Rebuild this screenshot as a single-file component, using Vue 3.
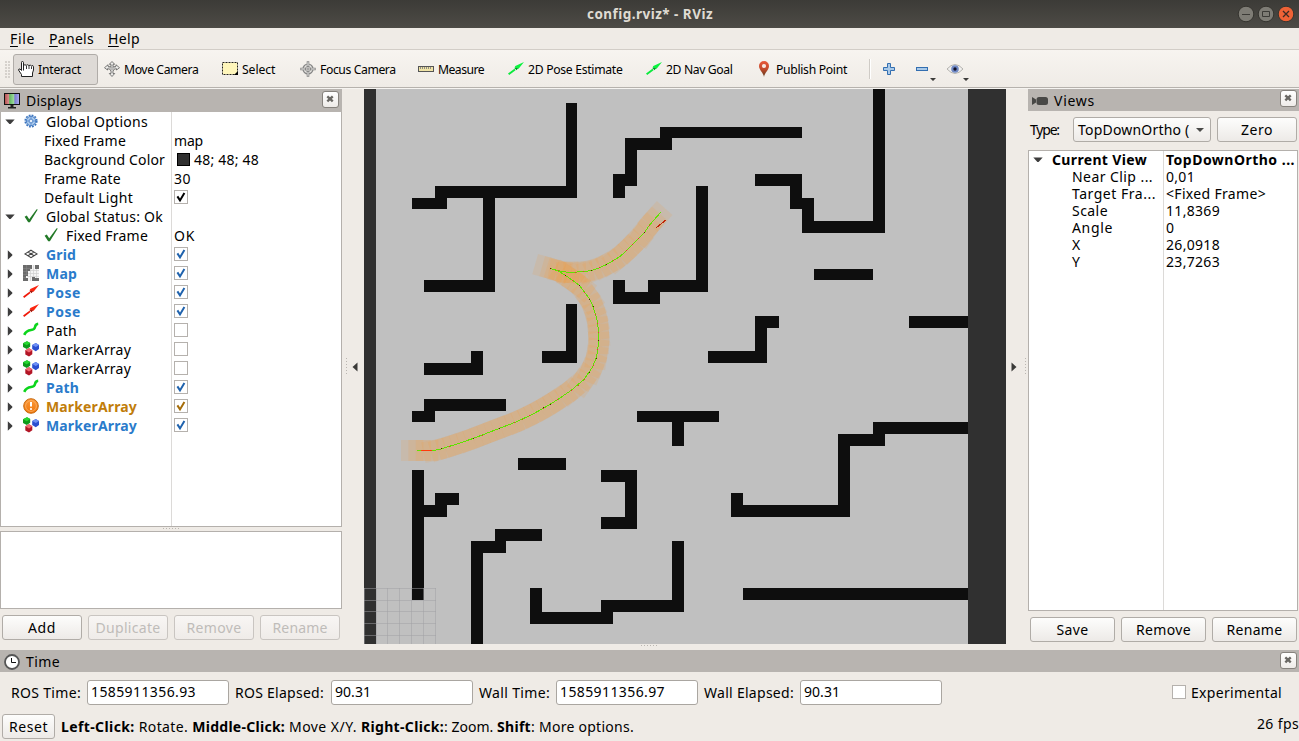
<script setup>
// Tracks a label to a fixed pixel width by adjusting its letter spacing.
const vFit = {
  mounted(el, { value }) {
    const chars = el.textContent.length
    const natural = el.getBoundingClientRect().width
    el.style.letterSpacing = ((value + 1 - natural) / chars).toFixed(3) + 'px'
  },
}

const menus = [
  { key: 'F', rest: 'ile', w: 24 },
  { key: 'P', rest: 'anels', w: 44 },
  { key: 'H', rest: 'elp', w: 31 },
]

const tools = [
  { icon: 'hand', label: 'Interact', w: 42, cls: 't85' },
  { icon: 'move', label: 'Move Camera', w: 73.3, cls: 't118' },
  { icon: 'select', label: 'Select', w: 32.3, cls: 't78' },
  { icon: 'focus', label: 'Focus Camera', w: 74.7, cls: 't118' },
  { icon: 'ruler', label: 'Measure', w: 45, cls: 't90' },
  { icon: 'garrow', label: '2D Pose Estimate', w: 93.5, cls: 't138' },
  { icon: 'garrow', label: '2D Nav Goal', w: 65.5, cls: 't110' },
  { icon: 'pin', label: 'Publish Point', w: 70, cls: 't110' },
]

const rows = [
  { exp: 'open', icon: 'gear', label: 'Global Options', w: 101 },
  { sub: 1, label: 'Fixed Frame', w: 81, value: 'map', vw: 28 },
  { sub: 1, label: 'Background Color', w: 120, value: '48; 48; 48', vw: 64, swatch: true },
  { sub: 1, label: 'Frame Rate', w: 76, value: '30', vw: 16 },
  { sub: 1, label: 'Default Light', w: 88, check: 'black' },
  { exp: 'open', icon: 'tick', label: 'Global Status: Ok', w: 116 },
  { sub: 2, icon: 'tick', label: 'Fixed Frame', w: 81, value: 'OK', vw: 20 },
  { exp: 'shut', icon: 'grid', label: 'Grid', w: 29, tone: 'blue', check: 'blue' },
  { exp: 'shut', icon: 'map', label: 'Map', w: 30, tone: 'blue', check: 'blue' },
  { exp: 'shut', icon: 'rarrow', label: 'Pose', w: 34, tone: 'blue', check: 'blue' },
  { exp: 'shut', icon: 'rarrow', label: 'Pose', w: 34, tone: 'blue', check: 'blue' },
  { exp: 'shut', icon: 'path', label: 'Path', w: 30, check: 'none' },
  { exp: 'shut', icon: 'cubes', label: 'MarkerArray', w: 84, check: 'none' },
  { exp: 'shut', icon: 'cubes', label: 'MarkerArray', w: 84, check: 'none' },
  { exp: 'shut', icon: 'path', label: 'Path', w: 32, tone: 'blue', check: 'blue' },
  { exp: 'shut', icon: 'warn', label: 'MarkerArray', w: 90, tone: 'gold', check: 'gold' },
  { exp: 'shut', icon: 'cubes', label: 'MarkerArray', w: 90, tone: 'blue', check: 'blue' },
]

const views = [
  { label: 'Near Clip ...', w: 80, value: '0,01', vw: 28 },
  { label: 'Target Fra...', w: 83, value: '<Fixed Frame>', vw: 99 },
  { label: 'Scale', w: 35, value: '11,8369', vw: 53 },
  { label: 'Angle', w: 40, value: '0', vw: 8 },
  { label: 'X', w: 9, value: '26,0918', vw: 53 },
  { label: 'Y', w: 9, value: '23,7263', vw: 53 },
]

const times = [
  { label: 'ROS Time:', w: 69, value: '1585911356.93', vw: 104, cls: 'l75' },
  { label: 'ROS Elapsed:', w: 88, value: '90.31', vw: 35, cls: 'l96' },
  { label: 'Wall Time:', w: 70, value: '1585911356.97', vw: 104, cls: 'l77' },
  { label: 'Wall Elapsed:', w: 89, value: '90.31', vw: 35, cls: 'l96' },
]

const hints = [
  { text: 'Left-Click: ', w: 76.7, bold: true },
  { text: 'Rotate. ', w: 52.5 },
  { text: 'Middle-Click: ', w: 95.8, bold: true },
  { text: 'Move X/Y. ', w: 71 },
  { text: 'Right-Click:', w: 82, bold: true },
  { text: ': Zoom. ', w: 52 },
  { text: 'Shift', w: 33, bold: true },
  { text: ': More options.', w: 102 },
]

// Occupied cells of the map: x, y, width, height.
const walls = [
  [566, 103, 11, 95], [435, 186, 142, 12], [412, 198, 35, 11], [483, 198, 12, 94], [424, 280, 71, 12],
  [660, 127, 142, 11], [625, 138, 47, 12], [625, 138, 12, 48], [613, 174, 24, 12], [613, 174, 12, 24],
  [613, 280, 12, 24], [613, 292, 47, 12], [648, 280, 60, 12], [696, 186, 12, 106],
  [566, 304, 11, 59], [542, 351, 35, 12], [471, 351, 12, 12], [424, 363, 59, 12],
  [755, 174, 47, 12], [790, 186, 12, 23], [802, 198, 12, 35], [802, 221, 83, 12], [873, 89, 12, 144],
  [814, 269, 59, 11], [909, 316, 59, 12], [755, 316, 24, 12], [755, 316, 12, 47], [708, 351, 59, 12],
  [424, 399, 82, 12], [412, 411, 23, 11], [637, 411, 82, 11], [672, 422, 12, 24], [518, 458, 48, 12],
  [412, 470, 12, 130], [435, 493, 24, 12], [424, 505, 23, 12], [495, 529, 47, 12], [471, 541, 35, 12],
  [471, 541, 12, 103], [601, 470, 36, 12], [625, 470, 12, 59], [601, 517, 36, 12],
  [672, 541, 12, 71], [601, 600, 83, 12], [530, 612, 83, 12], [530, 588, 12, 36],
  [731, 493, 12, 24], [731, 505, 119, 12], [838, 434, 12, 83], [838, 434, 47, 12], [873, 422, 95, 12],
  [743, 588, 225, 12],
]
const gridX = [364, 376, 387, 399, 411, 423, 435]
const gridY = [588, 600, 611, 623, 635]

const leg1 = [
  [417, 450.5], [434, 450.5], [441, 449], [457, 444], [473, 438.5], [499, 428.5], [516, 422], [531, 415],
  [544, 408], [557, 400], [571, 390.5], [584, 379.5], [592.5, 367], [596.5, 357], [598.5, 344], [598.5, 332],
  [597.5, 322], [595.5, 314], [592.8, 306], [589.5, 299], [584.5, 292], [579.5, 285.5], [572.8, 280.5],
  [565.5, 275.5], [558.5, 271], [550.5, 268.5],
]
const leg2 = [
  [550.5, 268.5], [558.5, 270.8], [567.5, 272.3], [583.5, 271.8], [591.8, 270.3], [599.5, 267.8], [606.5, 264.5],
  [613.5, 260.5], [619.5, 256.8], [626.5, 250.8], [632.5, 244.8], [638.5, 238.8], [644.5, 232.5],
  [649, 225.8], [654.8, 219], [660.8, 212.3],
]

// Places poses along a polyline at an even spacing.
function sample(points, step) {
  const out = []
  let carry = 0
  for (let i = 0; i < points.length - 1; i++) {
    const [x1, y1] = points[i]
    const [x2, y2] = points[i + 1]
    const len = Math.hypot(x2 - x1, y2 - y1)
    const deg = (Math.atan2(y2 - y1, x2 - x1) * 180) / Math.PI
    for (; carry < len; carry += step) {
      out.push({ x: x1 + ((x2 - x1) * carry) / len, y: y1 + ((y2 - y1) * carry) / len, deg })
    }
    carry -= len
  }
  return out
}
const poses = [...sample(leg1, 7.4), ...sample(leg2, 7.4)]
const line = (pts) => pts.map((p) => p.join(',')).join(' ')

const redDots = [
  [449, 446], [482, 435], [514, 422], [522, 419], [529, 415], [543, 408], [557, 399], [571, 390], [578, 385],
  [584, 379], [593, 365], [597, 349], [598, 332], [597, 323], [595, 314], [584, 292], [572, 280], [558, 270],
  [575, 272], [583, 271], [599, 267], [613, 260], [626, 250], [632, 244], [638, 238], [649, 225],
]
const darkDots = [
  [441, 448], [473, 438], [499, 428], [543, 407], [550, 404], [589, 372], [598, 340], [596, 358],
  [593, 306], [589, 299], [579, 285], [565, 275], [550, 268], [591, 270], [606, 264], [644, 232],
]
</script>

<template>
  <svg class="defs" width="0" height="0">
    <defs>
      <linearGradient id="pinfill" x1="0" y1="0" x2="0" y2="1">
        <stop offset="0" stop-color="#e8583a" /><stop offset=".5" stop-color="#c34a2c" /><stop offset="1" stop-color="#5a3a1c" />
      </linearGradient>
      <linearGradient id="screen" x1="0" y1="0" x2="1" y2="0">
        <stop offset="0" stop-color="#b04a4a" /><stop offset=".3" stop-color="#d89090" /><stop offset=".34" stop-color="#62b862" />
        <stop offset=".64" stop-color="#a0dca0" /><stop offset=".68" stop-color="#7878d0" /><stop offset="1" stop-color="#b0b0f0" />
      </linearGradient>
      <linearGradient id="warnfill" x1="0" y1="0" x2="0" y2="1">
        <stop offset="0" stop-color="#fb9a3c" /><stop offset="1" stop-color="#f07508" />
      </linearGradient>
    </defs>
    <symbol id="hand" viewBox="0 0 16 16">
      <path d="M5.5 9.5V1.6Q5.5.5 4.4.5T3.5 1.6V9.5L2 8Q.6 7.6.5 9L3.5 13.5V15.5H14.5V12L15.5 9V5.5Q15.3 4.3 14 4.7L13.3 5Q12.5 3.5 10.9 4.6Q9.7 3 8.3 4.3Q6.8 3.2 5.5 4.4" fill="#fff" stroke="#222" stroke-width="1" />
      <path d="M8.5 5V8M11 5V8M13.5 5.5V8" stroke="#222" fill="none" stroke-width=".9" />
    </symbol>
    <symbol id="move" viewBox="0 0 16 16">
      <path d="M8 .5 10.7 3.3H9V5L10 5.8 12 5.3V3.8L15.5 6.7 12.5 9V7.7L10 8.2 9 10.5V12.5H10.7L8 15.5 5.3 12.5H7V10.5L6 8.2 3.5 7.7V9L.5 6.7 4 3.8V5.3L6 5.8 7 5V3.3H5.3Z" fill="#efeeec" stroke="#5c5c5c" stroke-width=".8" />
      <path d="M6 5.8H10L9 8.2H7Z M8 4V12M4 6.7H12" stroke="#8a8a8a" fill="none" stroke-width=".5" />
    </symbol>
    <symbol id="select" viewBox="0 0 16 16">
      <rect x=".5" y="1.5" width="15" height="12" fill="#fff6bb" stroke="#222" stroke-dasharray="2 1" />
      <path d="M16 10V14H12Z" fill="#000" />
    </symbol>
    <symbol id="focus" viewBox="0 0 16 16">
      <circle cx="8" cy="8" r="5" fill="#e6e4e1" stroke="#858585" stroke-width="1.2" />
      <path d="M8 .3V5.5M8 10.5V15.7M.3 8H5.5M10.5 8H15.7" stroke="#858585" stroke-width="2.6" />
      <path d="M8 1.2V14.8M1.2 8H14.8" stroke="#ecebe9" stroke-width="1" />
      <circle cx="8" cy="8" r="2.6" fill="none" stroke="#858585" stroke-width=".8" />
      <path d="M8 5V11M5 8H11" stroke="#666" stroke-width=".6" />
    </symbol>
    <symbol id="ruler" viewBox="0 0 16 16">
      <rect x=".5" y="5.5" width="15" height="5" fill="#efe3a6" stroke="#555" />
      <path d="M2.5 6V8M4.5 6V8M6.5 6V8M8.5 6V8M10.5 6V8M12.5 6V8" stroke="#777" stroke-width=".8" />
    </symbol>
    <symbol id="garrow" viewBox="0 0 16 16">
      <path d="M.6 13.2 7 8.4" stroke="#0bea3c" stroke-width="1.9" />
      <path d="M16 1 10.6 7.8 9.4 7.6 8.8 9.2 6.4 6.8 7.4 6 6.8 5.2Z" fill="#0bf23e" />
      <path d="M6.4 6.9 10 7 8.6 9Z" fill="#0b8a30" />
    </symbol>
    <symbol id="rarrow" viewBox="0 0 16 16">
      <path d="M.6 13.2 7 8.4" stroke="#f01808" stroke-width="1.8" />
      <path d="M16 1 10.6 7.8 9.4 7.6 8.8 9.2 6.4 6.8 7.4 6 6.8 5.2Z" fill="#fa2510" />
      <path d="M6.4 6.9 10 7 8.6 9Z" fill="#9a1c10" />
    </symbol>
    <symbol id="pin" viewBox="0 0 16 16">
      <path d="M8 16C7.6 12 3 9 3 5A5 5 0 0 1 13 5C13 9 8.4 12 8 16Z" fill="url(#pinfill)" />
      <circle cx="8" cy="5" r="2.1" fill="#f7e9e4" />
    </symbol>
    <symbol id="gear" viewBox="0 0 16 16">
      <circle cx="8" cy="8" r="5.7" fill="none" stroke="#3b74bd" stroke-width="1.8" stroke-dasharray="1.8 1.18" />
      <circle cx="8" cy="8" r="4.7" fill="#a9c9ec" stroke="#4a80c6" />
      <circle cx="8" cy="8" r="1.9" fill="#e8f0fa" stroke="#4a80c6" stroke-width=".9" />
      <path d="M8 3.5V6M8 10V12.5M3.5 8H6M10 8H12.5" stroke="#4a80c6" stroke-width=".7" />
    </symbol>
    <symbol id="tick" viewBox="0 0 16 16">
      <path d="M1.6 8.8 3.8 7.6 6.2 11.2 13.6 1.2 14.8 1.6 6.9 14.2H5.2Z" fill="#237a28" />
    </symbol>
    <symbol id="grid" viewBox="0 0 16 16">
      <path d="M8 4.2 14 7.9 8 11.6 2 7.9ZM5 6 11 9.8M11 6 5 9.8" fill="none" stroke="#444" stroke-width="1.1" />
    </symbol>
    <symbol id="map" viewBox="0 0 16 16">
      <rect width="16" height="16" fill="#f4f4f4" />
      <path d="M5 5.5H16M5 8.5H16M4 11.5H16M7.5 4V16M10.5 0V12M13.5 3V13" stroke="#cfcfcf" stroke-width=".7" />
      <path d="M0 0H9V4H7V6H5V11H3V13H5V16H0ZM12 0H16V4H12ZM9 12H12V13H16V16H9Z" fill="#6b6b6b" />
      <path d="M0 3.5H8M0 6.5H5M0 9.5H5M0 12.5H3M3.5 0V10" stroke="#8c8c8c" stroke-width=".5" />
    </symbol>
    <symbol id="path" viewBox="0 0 16 16">
      <path d="M1.2 12.9C3.3 8.5 5.6 8.2 8 8S11.6 7.4 12 5.1 13.2 2 15.2 1.8" fill="none" stroke="#0cd51c" stroke-width="2.6" />
    </symbol>
    <symbol id="cubes" viewBox="0 0 16 16">
      <path d="M0 2.2 4 .2 7.2 2V5.8L3.8 8 0 6Z" fill="#0f9a1c" /><path d="M0 2.2 4 .2 7.2 2 3.8 4.2Z" fill="#26d830" />
      <path d="M9.2 4 12.8 2 16 4V8L12.8 10.2 9.2 8Z" fill="#2a4fd0" /><path d="M9.2 4 12.8 2 16 4 12.8 6Z" fill="#6d90f5" />
      <path d="M2.3 9.2 6 7.2 9.3 9.2V13.2L6 15.6 2.3 13.4Z" fill="#b31626" /><path d="M2.3 9.2 6 7.2 9.3 9.2 6 11.4Z" fill="#f06a72" />
    </symbol>
    <symbol id="warn" viewBox="0 0 16 16">
      <circle cx="8" cy="8" r="7.3" fill="url(#warnfill)" stroke="#c8690e" />
      <circle cx="8" cy="8" r="5.4" fill="none" stroke="#fbb46c" stroke-width=".8" />
      <path d="M8 4V8.6" stroke="#fff" stroke-width="2" /><circle cx="8" cy="11" r="1.1" fill="#fff" />
    </symbol>
    <symbol id="x" viewBox="0 0 16 16">
      <path d="M4.6 4.6 10.4 10M10.4 4.6 4.6 10" stroke="#6a6864" stroke-width="2.5" />
    </symbol>
    <symbol id="mark" viewBox="0 0 14 14">
      <path d="M3.4 6.4 6 10.4 10.4 3" fill="none" stroke="currentColor" stroke-width="2" />
    </symbol>
  </svg>

  <div class="window">
    <header class="titlebar">
      <span class="side"></span>
      <span v-fit="125" class="title">config.rviz* - RViz</span>
      <span class="side controls">
        <svg width="58" height="18" viewBox="0 0 58 18">
          <circle cx="9" cy="9" r="7.8" fill="#7e7c75" stroke="#35342f" />
          <circle cx="29" cy="9" r="7.8" fill="#7e7c75" stroke="#35342f" />
          <circle cx="49" cy="9" r="7.8" fill="#ee6236" stroke="#35342f" />
          <path d="M5 9.5H13M25.5 6.5H32.5V11.5H25.5Z" fill="none" stroke="#3c3b37" />
          <path d="M46 6 52 12M52 6 46 12" stroke="#3c2b24" stroke-width="1.3" />
        </svg>
      </span>
    </header>

    <nav class="menubar">
      <span v-for="m in menus" :key="m.key" v-fit="m.w" class="menu"><u>{{ m.key }}</u>{{ m.rest }}</span>
    </nav>

    <div class="toolbar">
      <span class="grip"></span>
      <div v-for="(t, i) in tools" :key="t.label" class="tool" :class="[t.cls, { active: i === 0 }]">
        <svg class="ic"><use :href="'#' + t.icon" /></svg><span v-fit="t.w">{{ t.label }}</span>
      </div>
      <span class="divider"></span>
      <svg class="extras" width="100" height="36" viewBox="0 0 100 36">
        <path d="M11.5 12.5H14.5V16.5H18.5V19.5H14.5V23.5H11.5V19.5H7.5V16.5H11.5Z" fill="#a9c9e8" stroke="#336eb0" />
        <rect x="40.5" y="16.5" width="11" height="3" fill="#a9c9e8" stroke="#336eb0" />
        <path d="M54 27H60L57 30Z M87 27H93L90 30Z" fill="#3c3b39" />
        <path d="M71 18Q79 9 87 18 79 27 71 18Z" fill="#f1f0ee" stroke="#b4b2ae" />
        <circle cx="79" cy="18" r="3.8" fill="#6f88c4" /><circle cx="79" cy="18" r="1.7" fill="#101028" />
      </svg>
    </div>

    <main class="work">
      <section class="displays">
        <div class="dockhead">
          <svg class="ic" viewBox="0 0 16 16">
            <rect x=".5" y=".5" width="15" height="11" fill="url(#screen)" stroke="#111" />
            <path d="M6.5 12H9.5V14H12V15.6H4V14H6.5Z" fill="#222" />
          </svg>
          <span v-fit="55">Displays</span><span class="grow"></span>
          <svg class="close"><use href="#x" /></svg>
        </div>
        <div class="tree">
          <div v-for="(r, i) in rows" :key="i" class="row">
            <div class="name" :class="'sub' + (r.sub || 0)">
              <svg v-if="r.exp" class="exp" width="10" height="10" viewBox="0 0 10 10">
                <path :d="r.exp === 'open' ? 'M.3 2.5H9.7L5.6 7H4.4Z' : 'M2.8 .3V9.7L7.3 5.6V4.4Z'" fill="#3d3d3d" />
              </svg>
              <svg v-if="r.icon" class="ic"><use :href="'#' + r.icon" /></svg>
              <span v-fit="r.w" :class="r.tone">{{ r.label }}</span>
            </div>
            <div class="val">
              <i v-if="r.swatch" class="swatch"></i>
              <span v-if="r.value" v-fit="r.vw">{{ r.value }}</span>
              <span v-if="r.check" class="check" :class="'c-' + r.check"><svg v-if="r.check !== 'none'" width="14" height="14"><use href="#mark" /></svg></span>
            </div>
          </div>
        </div>
        <span class="hdots"></span>
        <div class="info"></div>
        <div class="buttons">
          <span class="btn"><b v-fit="27">Add</b></span>
          <span class="btn off"><b v-fit="64">Duplicate</b></span>
          <span class="btn off"><b v-fit="54">Remove</b></span>
          <span class="btn off"><b v-fit="54">Rename</b></span>
        </div>
      </section>

      <div class="gutter"><span class="vdots"></span><svg width="6" height="10"><path d="M5.5 .5V9.5L.5 5Z" fill="#3a3a38" /></svg></div>

      <svg class="scene" width="642" height="555" viewBox="364 89 642 555">
        <rect x="364" y="89" width="642" height="555" fill="#303030" />
        <rect x="376" y="89" width="592" height="555" fill="#c0c0c0" />
        <rect v-for="(w, i) in walls" :key="i" :x="w[0]" :y="w[1]" :width="w[2]" :height="w[3]" fill="#0e0e0e" />
        <rect v-for="x in gridX" :key="'x' + x" :x="x" y="588" width="1" height="56" fill="#a0a0a4" opacity=".5" />
        <rect v-for="y in gridY" :key="'y' + y" x="364" :y="y" width="72" height="1" fill="#a0a0a4" opacity=".5" />
        <rect v-for="(p, i) in poses" :key="'p' + i" x="-16" y="-10.5" width="22.4" height="21" fill="#ff9020" opacity=".12"
          :transform="`translate(${p.x} ${p.y}) rotate(${p.deg})`" />
        <g fill="none" shape-rendering="crispEdges">
          <polyline :points="line(leg1)" stroke="#5fe300" />
          <polyline :points="line(leg2)" stroke="#5fe300" />
          <path d="M421 450.5H432" stroke="#ff3a0a" />
          <path d="M656.5 227.5 666.5 219.5" stroke="#c02408" />
          <rect v-for="(d, i) in redDots" :key="'r' + i" :x="d[0]" :y="d[1]" width="1" height="1" fill="#e03c30" />
          <rect v-for="(d, i) in darkDots" :key="'d' + i" :x="d[0]" :y="d[1]" width="1" height="1" fill="#5a1c08" />
        </g>
      </svg>

      <div class="gutter right"><svg width="6" height="10"><path d="M.5 .5V9.5L5.5 5Z" fill="#3a3a38" /></svg><span class="vdots"></span></div>

      <section class="views">
        <div class="dockhead">
          <svg class="ic" viewBox="0 0 16 16"><path d="M0 4V12L4 9.6V6.4Z" fill="#484846" /><rect x="4.5" y="4" width="11.5" height="8" rx="2.5" fill="#484846" /></svg>
          <span v-fit="40">Views</span><span class="grow"></span>
          <svg class="close"><use href="#x" /></svg>
        </div>
        <div class="typerow">
          <span v-fit="36" class="tlabel">Type:</span>
          <span class="combo"><b v-fit="110.5" class="ctext">TopDownOrtho (</b><svg width="8" height="4"><path d="M0 0H8L4 4Z" fill="#4a4a48" /></svg></span>
          <span class="btn zero"><b v-fit="31">Zero</b></span>
        </div>
        <div class="vtree">
          <div class="vrow head">
            <div class="vname"><svg class="exp" width="10" height="10" viewBox="0 0 10 10"><path d="M.3 2.5H9.7L5.6 7H4.4Z" fill="#3d3d3d" /></svg><span v-fit="94">Current View</span></div>
            <span v-fit="128">TopDownOrtho ...</span>
          </div>
          <div v-for="v in views" :key="v.label" class="vrow">
            <div class="vname leaf"><span v-fit="v.w">{{ v.label }}</span></div>
            <span v-fit="v.vw">{{ v.value }}</span>
          </div>
        </div>
        <div class="buttons vb">
          <span class="btn"><b v-fit="31">Save</b></span>
          <span class="btn"><b v-fit="54">Remove</b></span>
          <span class="btn"><b v-fit="55">Rename</b></span>
        </div>
      </section>
    </main>

    <span class="hdots mid"></span>
    <div class="dockhead timehead">
      <svg class="ic" viewBox="0 0 16 16"><circle cx="8" cy="8" r="7" fill="#fff" stroke="#555" stroke-width="1.8" /><path d="M7.5 4V8.5H12" fill="none" stroke="#111" /></svg>
      <span v-fit="33">Time</span><span class="grow"></span>
      <svg class="close"><use href="#x" /></svg>
    </div>
    <div class="timerow">
      <template v-for="t in times" :key="t.label">
        <span class="tl" :class="t.cls"><span v-fit="t.w">{{ t.label }}</span></span>
        <span class="field"><span v-fit="t.vw">{{ t.value }}</span></span>
      </template>
      <span class="grow"></span>
      <span class="check c-none expbox"></span>
      <span v-fit="90" class="expt">Experimental</span>
    </div>
    <footer class="status">
      <span class="btn reset"><b v-fit="38">Reset</b></span>
      <span class="hint"><span v-for="h in hints" :key="h.text" v-fit="h.w" :class="{ strong: h.bold }">{{ h.text }}</span></span>
      <span class="grow"></span>
      <span v-fit="41" class="fps">26 fps</span>
    </footer>
  </div>
</template>

<style>
html, body { margin: 0; overflow: hidden; }
</style>

<style scoped>
.defs { position: absolute; }
.window { width: 1299px; height: 741px; display: flex; flex-direction: column; overflow: hidden; background: #efebe6; font-family: "Noto Sans", "Open Sans", sans-serif; font-size: 14px; line-height: 19px; color: #000; white-space: pre; box-sizing: border-box; }
.window * { box-sizing: border-box; }
.window b { font-weight: 400; }
svg { display: block; flex: none; }
.grow { flex: 1; }
.ic { width: 16px; height: 16px; }

.titlebar { height: 28px; display: flex; align-items: center; background: linear-gradient(#3c3b37, #4d4b46); color: #dfdbd2; font-weight: 700; font-size: 13.5px; }
.side { flex: 1; }
.title { margin-left: 5px; }
.controls { display: flex; justify-content: flex-end; padding-right: 4px; }
.menubar { height: 22px; display: flex; padding: 1px 0 0 10px; gap: 14px; border-bottom: 1px solid #d2cdc7; }
.menu u { text-decoration-thickness: 1px; text-underline-offset: 2px; }

.toolbar { height: 39px; display: flex; align-items: center; background: linear-gradient(#f7f4f0, #efebe6); border-bottom: 1px solid #f6f4f1; box-shadow: inset 0 -1px #b6b2ad; font-size: 12.2px; padding-left: 5px; }
.grip { width: 5px; height: 17px; margin-right: 3px; background: radial-gradient(circle at 1px 1px, #cbc7c2 .6px, transparent 1px) 0 0 / 3px 3px; }
.tool { height: 31px; display: flex; align-items: center; gap: 4px; padding-left: 5px; flex: none; }
.active { border: 1px solid #b0aca8; border-radius: 3px; background: #dedad6; padding-left: 4px; margin-right: 1px; }
.t85 { width: 85px; } .t118 { width: 118px; } .t78 { width: 78px; } .t90 { width: 90px; } .t138 { width: 138px; } .t110 { width: 110px; }
.divider { width: 2px; height: 20px; margin-left: 8px; border-left: 1px solid #cfcbc6; border-right: 1px solid #fff; }
.extras { margin-left: 5px; }

.work { height: 555px; display: flex; }
.displays { width: 342px; display: flex; flex-direction: column; }
.dockhead { height: 23px; flex: none; display: flex; align-items: center; padding: 1px 3px 0 4px; background: #b8b4b0; }
.dockhead > span:nth-child(2) { margin-left: 6px; margin-top: -1px; }
.close { width: 17px; height: 17px; margin-top: -4px; border: 1px solid #86827d; border-radius: 3px; background: linear-gradient(#fff, #eeebe8); }
.tree { height: 415px; border: 1px solid #b4b0ac; border-top: 0; background: linear-gradient(#dcdad8, #dcdad8) 170px 0 / 1px 100% no-repeat #fff; }
.row { height: 19px; display: flex; align-items: center; }
.name { width: 173px; display: flex; align-items: center; padding-left: 4px; }
.name .exp { margin-right: 8px; }
.name .ic { margin-right: 7px; margin-top: -2px; }
.sub1 { padding-left: 43px; }
.sub2 { padding-left: 42px; }
.val { display: flex; align-items: center; }
.blue { color: #2a7bcb; font-weight: 700; }
.gold { color: #c17d0b; font-weight: 700; }
.swatch { width: 13px; height: 13px; margin: 0 4px 0 3px; background: #303030; border: 1px solid #000; }
.check { width: 14px; height: 14px; background: #fff; border: 1px solid #b5b1ad; display: flex; margin-top: -2px; }
.check svg { margin: -1px; }
.c-black { color: #000; } .c-blue { color: #1f62ad; } .c-gold { color: #a56c08; }
.hdots { width: 17px; height: 4px; align-self: center; flex: none; background: linear-gradient(90deg, #bab6b1 1px, transparent 1px) 0 1px / 3px 1px repeat-x; }
.info { height: 78px; border: 1px solid #b4b0ac; background: #fff; }
.buttons { display: flex; gap: 6px; padding: 6px 2px 0; }
.btn { height: 25px; flex: 1; display: flex; align-items: center; justify-content: center; border: 1px solid #b0aca7; border-radius: 3px; background: linear-gradient(#fdfdfc, #edeae7); }
.off { color: #bfbcb9; border-color: #c9c5c1; background: linear-gradient(#f8f6f4, #efebe8); }
.gutter { width: 22px; display: flex; align-items: center; gap: 5px; padding-left: 4px; }
.vdots { width: 1px; height: 17px; background: linear-gradient(#bab6b1 1px, transparent 1px) 0 0 / 1px 3px; }
.right { padding-left: 5px; gap: 8px; }

.views { width: 271px; display: flex; flex-direction: column; }
.views .dockhead { height: 22px; padding-right: 2px; }
.views .dockhead > span:nth-child(2) { margin-left: 6px; margin-top: 0; }
.typerow { display: flex; align-items: center; padding: 6px 2px 0; height: 31px; }
.tlabel { width: 43px; }
.combo { width: 138px; height: 25px; display: flex; align-items: center; justify-content: space-between; border: 1px solid #b0aca7; border-radius: 3px; background: linear-gradient(#fdfdfc, #edeae7); margin-right: 6px; padding: 0 6px 0 4px; }
.vtree { margin: 8px 1px 0 0; height: 461px; border: 1px solid #b4b0ac; background: linear-gradient(#dcdad8, #dcdad8) 134px 0 / 1px 100% no-repeat #fff; }
.vrow { height: 17px; line-height: 17px; display: flex; align-items: center; }
.head { font-weight: 700; }
.vname { width: 137px; display: flex; align-items: center; padding-left: 4px; }
.vname .exp { margin-right: 9px; }
.leaf { padding-left: 43px; }

.mid { height: 6px; }
.timehead { height: 22px; padding-right: 2px; }
.timehead .close { margin-top: -2px; }
.timehead > span:nth-child(2) { margin-top: 0; }
.timerow { height: 39px; display: flex; align-items: center; padding: 1px 17px 0 11px; }
.tl { display: flex; }
.l75 { width: 76px; } .l96 { width: 96px; } .l77 { width: 77px; }
.field { width: 142px; height: 25px; display: flex; align-items: center; padding: 0 0 1px 3px; border: 1px solid #aaa6a1; border-radius: 3px; background: #fff; margin-right: 6px; }
.expbox { margin-top: 0; }
.expt { margin-left: 5px; }
.status { height: 30px; display: flex; align-items: center; padding: 1px 0 0 2px; }
.reset { width: 53px; flex: none; }
.hint { margin-left: 6px; margin-top: -1px; display: flex; }
.strong { font-weight: 700; }
.fps { margin-top: -6px; }
</style>
